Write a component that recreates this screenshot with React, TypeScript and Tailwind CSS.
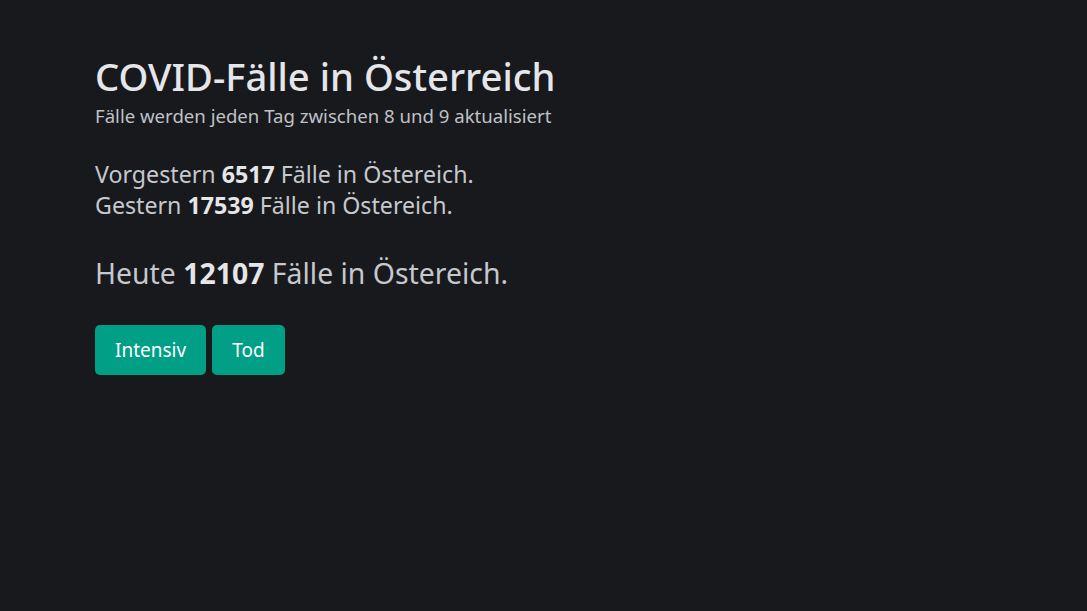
export default function App() {
  return (
    <div
      className="min-h-[611px] w-full bg-[#18191d] text-[#c5c8cc]"
      style={{ fontFamily: '"Noto Sans", "Open Sans", sans-serif' }}
    >
      <div className="px-[95px] pt-[52px]">
        <h1 className="text-[38.2px] font-medium leading-[48px] text-[#e4e6e9]">COVID-Fälle in Österreich</h1>
        <p className="mt-[3px] text-[18.6px] leading-[26px] text-[#bfc2c6]">Fälle werden jeden Tag zwischen 8 und 9 aktualisiert</p>

        <div className="mt-[30px] text-[23.2px] leading-[31px]">
          <p>
            Vorgestern <b className="text-[#e4e6e9]">6517</b> Fälle in Östereich.
          </p>
          <p>
            Gestern <b className="text-[#e4e6e9]">17539</b> Fälle in Östereich.
          </p>
        </div>

        <p className="mt-[34px] text-[28.4px] leading-[36px]">
          Heute <b className="text-[#e4e6e9]">12107</b> Fälle in Östereich.
        </p>

        <div className="mt-[34px] flex gap-[6px]">
          <button className="h-[50px] rounded-[5px] bg-[#009f86] px-[20px] text-[19px] text-white">Intensiv</button>
          <button className="h-[50px] rounded-[5px] bg-[#009f86] px-[20px] text-[19px] text-white">Tod</button>
        </div>
      </div>
    </div>
  );
}
